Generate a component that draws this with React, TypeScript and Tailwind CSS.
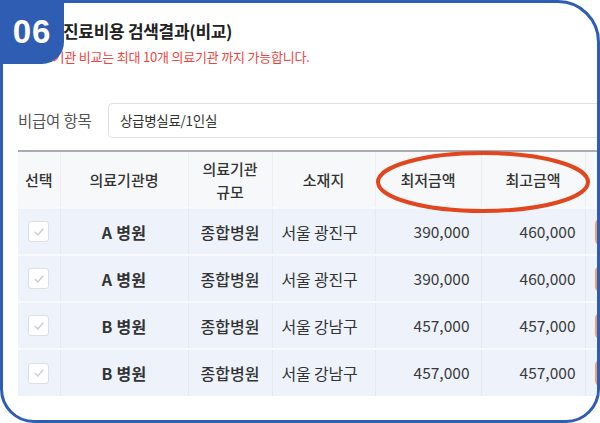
import React from 'react';

type Row = { name: string; size: string; region: string; min: string; max: string };

const rows: Row[] = [
  { name: 'A 병원', size: '종합병원', region: '서울 광진구', min: '390,000', max: '460,000' },
  { name: 'A 병원', size: '종합병원', region: '서울 광진구', min: '390,000', max: '460,000' },
  { name: 'B 병원', size: '종합병원', region: '서울 강남구', min: '457,000', max: '457,000' },
  { name: 'B 병원', size: '종합병원', region: '서울 강남구', min: '457,000', max: '457,000' },
];

const font = { fontFamily: '"Noto Sans CJK KR", "Noto Sans", sans-serif' };

function CheckBox() {
  return (
    <span className="mx-auto flex h-[21px] w-[21px] items-center justify-center rounded-[3px] border border-[#dcdfe4] bg-white">
      <svg width="12" height="12" viewBox="0 0 12 12" fill="none">
        <path d="M2 6.3 4.8 9 10 3" stroke="#c9ccd1" strokeWidth="1.3" strokeLinecap="round" strokeLinejoin="round" />
      </svg>
    </span>
  );
}

export default function App() {
  return (
    <div className="h-[423px] w-[600px] bg-white" style={font}>
      <div className="relative h-full w-full overflow-hidden rounded-tr-[42px] rounded-b-[34px] border-[3px] border-[#2f5db3] bg-white">
        {/* heading */}
        <div className="pl-[60px] pt-[16px]">
          <h1 className="text-[17px] font-bold leading-[24px] tracking-[-0.3px] text-[#222]">진료비용 검색결과(비교)</h1>
        </div>
        <p className="mt-[6px] pl-[26px] text-[13px] leading-[16px] tracking-[-0.2px] text-[#f0453f]">
          의료기관 비교는 최대 10개 의료기관 까지 가능합니다.
        </p>

        {/* filter */}
        <div className="mt-[38px] flex items-center pl-[15px]">
          <span className="w-[90px] text-[15.5px] tracking-[-0.2px] text-[#555]">비급여 항목</span>
          <div className="-mr-[12px] flex h-[35px] flex-1 items-center rounded-[4px] border border-[#dfe1e5] pl-[11px] text-[13.5px] tracking-[-0.3px] text-[#333]">
            상급병실료/1인실
          </div>
        </div>

        {/* table */}
        <div className="ml-[15px] mt-[12px] w-[640px]">
          <table className="w-full table-fixed border-collapse border-t-[2px] border-[#a9adb3]">
            <colgroup>
              <col className="w-[42px]" />
              <col className="w-[128px]" />
              <col className="w-[84px]" />
              <col className="w-[103px]" />
              <col className="w-[106px]" />
              <col className="w-[104px]" />
              <col />
            </colgroup>
            <thead>
              <tr className="h-[57px] bg-[#f7f8fa] text-[15px] font-medium leading-[23px] text-[#333]">
                <th className="border-r border-[#eceef1] font-medium">선택</th>
                <th className="border-r border-[#eceef1] font-medium">의료기관명</th>
                <th className="border-r border-[#eceef1] font-medium">
                  의료기관
                  <br />
                  규모
                </th>
                <th className="border-r border-[#eceef1] font-medium">소재지</th>
                <th className="border-r border-[#eceef1] font-medium">최저금액</th>
                <th className="border-r border-[#eceef1] font-medium">최고금액</th>
                <th className="font-medium" />
              </tr>
            </thead>
            <tbody>
              {rows.map((r, i) => (
                <tr key={i} className="h-[47px] border-t-[2px] border-[#f7f9fd] bg-[#eef3fb] text-[16px] text-[#333]">
                  <td className="border-r border-[#e4e9f1]">
                    <CheckBox />
                  </td>
                  <td className="border-r border-[#e4e9f1] text-center font-bold tracking-[0.3px]">{r.name}</td>
                  <td className="border-r border-[#e4e9f1] text-center font-medium">{r.size}</td>
                  <td className="border-r border-[#e4e9f1] pl-[9px] tracking-[-0.2px]">{r.region}</td>
                  <td className="border-r border-[#e4e9f1] pr-[11px] text-right text-[15.5px] text-[#3a3a3a]">{r.min}</td>
                  <td className="border-r border-[#e4e9f1] pr-[9px] text-right text-[15.5px] text-[#3a3a3a]">{r.max}</td>
                  <td className="pl-[9px]">
                    <span className="block h-[26px] w-[40px] rounded-[5px] border-2 border-[#f0a070]" />
                  </td>
                </tr>
              ))}
            </tbody>
          </table>
        </div>

        {/* badge */}
        <div className="absolute left-[-3px] top-[-3px] flex h-[64px] w-[64px] items-center justify-center rounded-br-[22px] bg-[#2f5db3]">
          <span className="text-[33px] font-extrabold tracking-[1px] text-white" style={{ fontFamily: '"Liberation Sans", Arial, sans-serif' }}>
            06
          </span>
        </div>

        {/* highlight */}
        <svg className="absolute left-[371px] top-[145px]" width="218" height="68" viewBox="0 0 218 68" fill="none">
          <ellipse cx="109" cy="34" rx="105" ry="29" stroke="#e1461f" strokeWidth="4" />
        </svg>
      </div>
    </div>
  );
}
